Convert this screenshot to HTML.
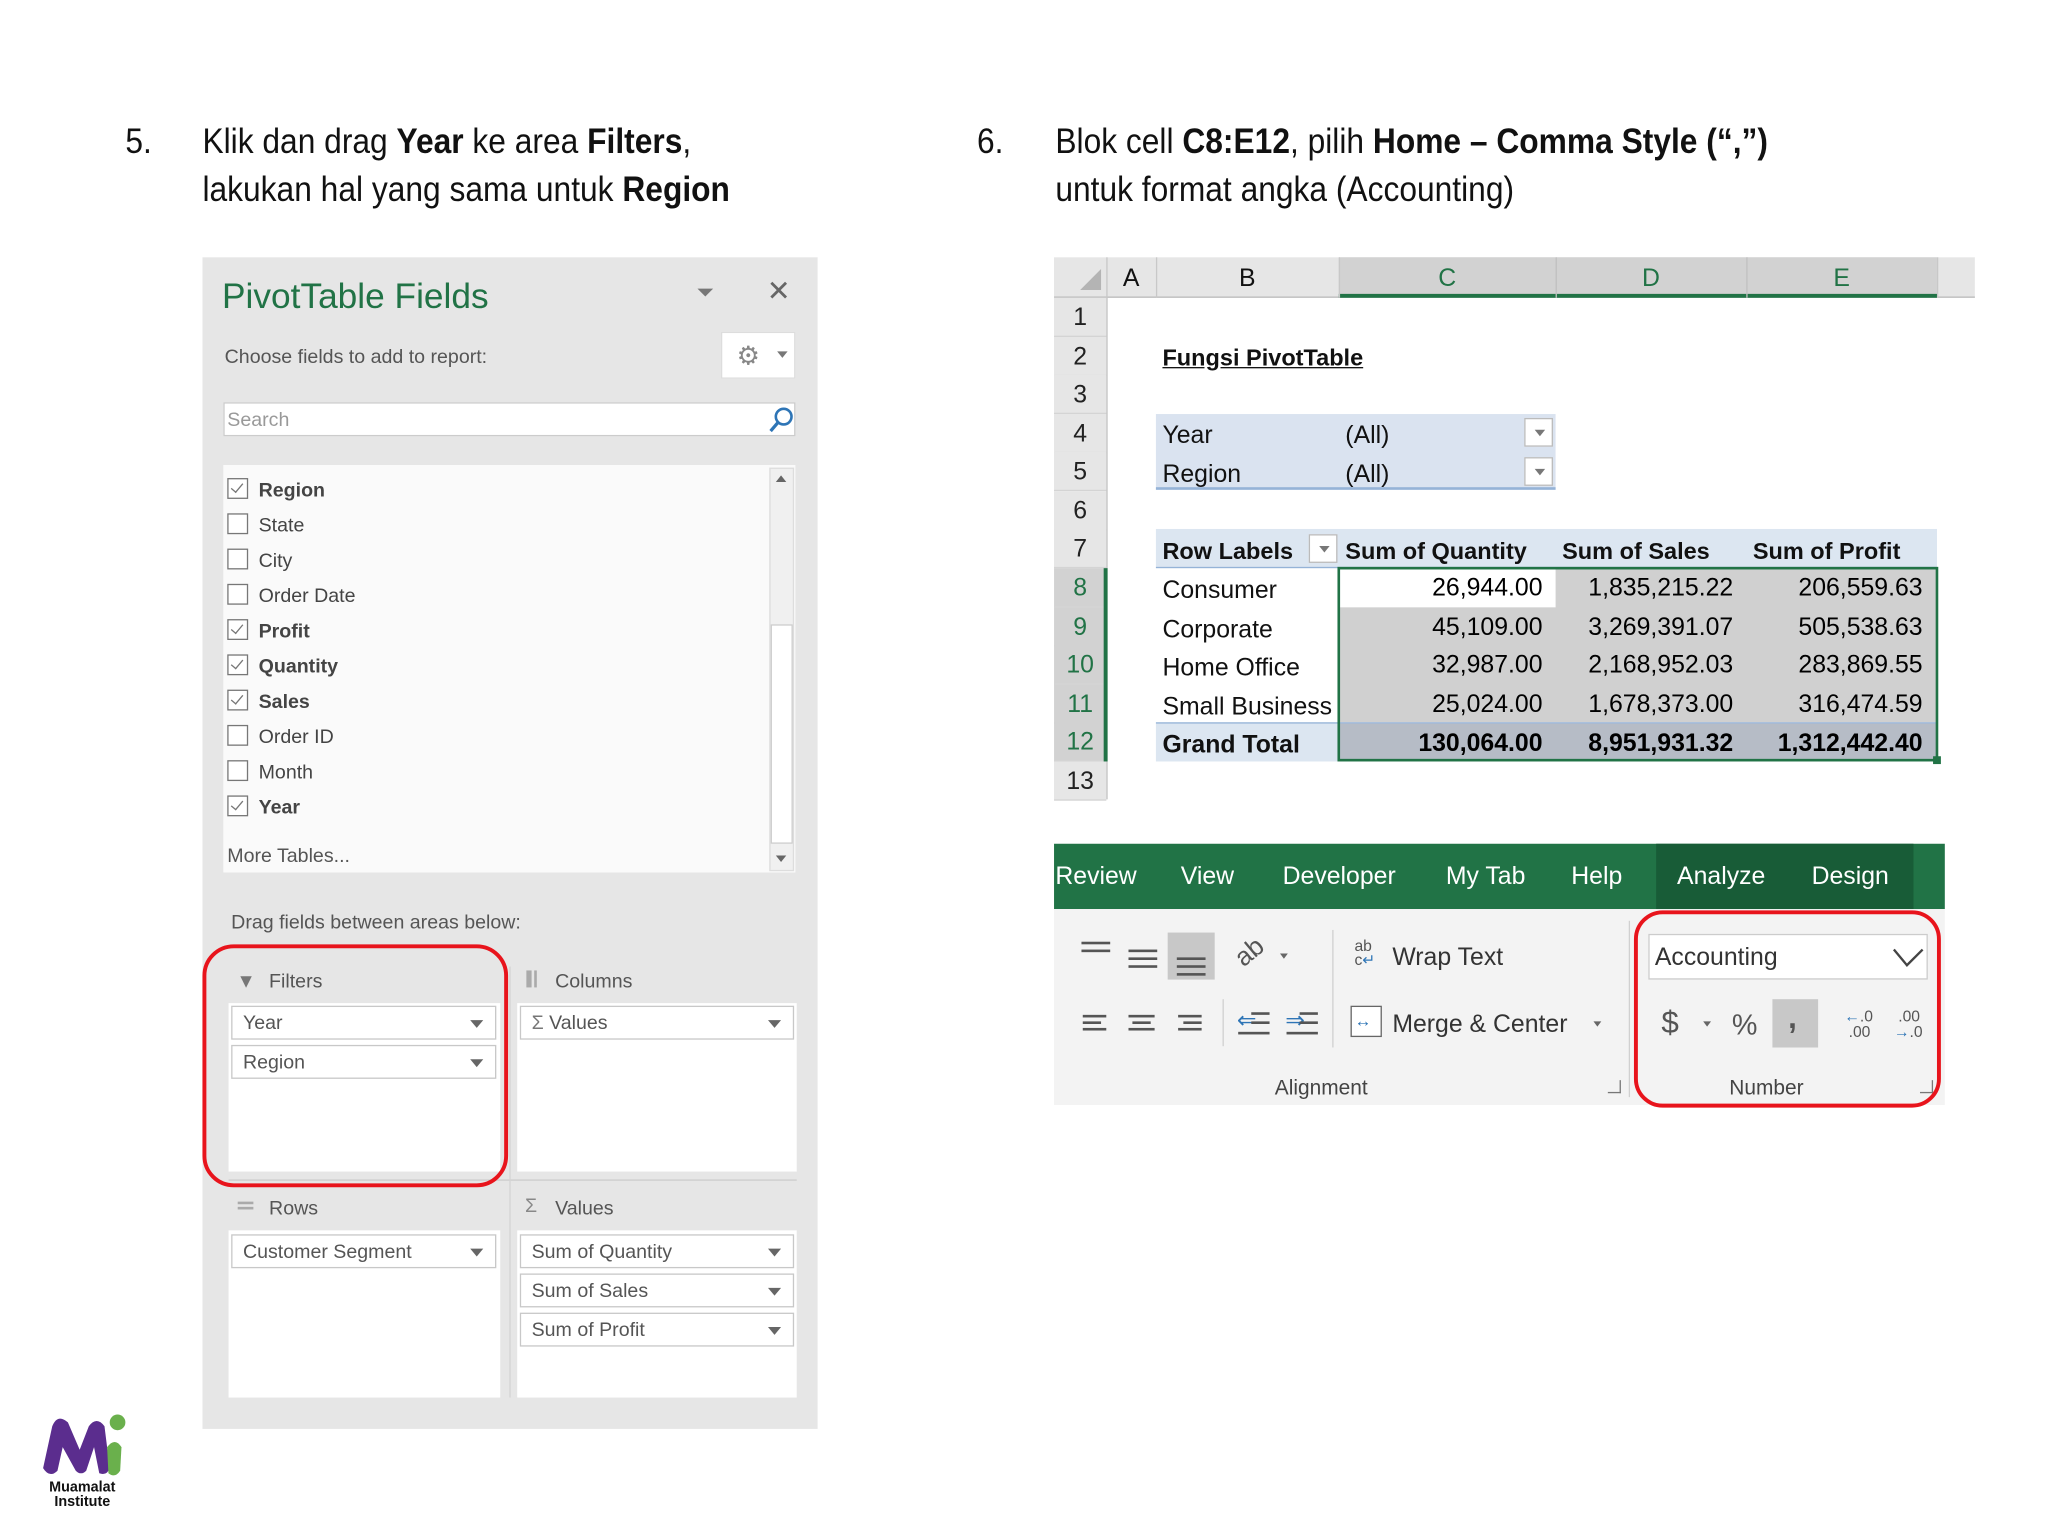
<!DOCTYPE html>
<html><head><meta charset="utf-8"><style>
html,body{margin:0;padding:0;background:#fff;overflow:hidden}
#w{position:absolute;left:0;top:0;width:1568px;height:1176px;transform:scale(1.30612);transform-origin:0 0;font-family:"Liberation Sans",sans-serif}
.a{position:absolute;white-space:nowrap}
.h{font-size:27px;color:#111;transform:scaleX(.9);transform-origin:0 50%}
.p{color:#555;font-size:15px}
.cb{position:absolute;width:14px;height:14px;border:1px solid #777;background:#fff;left:174px}
.cb.c::after{content:"";position:absolute;left:4px;top:1px;width:4px;height:8px;border:solid #777;border-width:0 1.5px 1.5px 0;transform:rotate(40deg)}
.fl{position:absolute;left:198px;font-size:15px;color:#444}
.btn{position:absolute;background:#fff;border:1px solid #c8c8c8;height:26px;line-height:26px;font-size:15px;color:#555;padding-left:8px;box-sizing:border-box}
.btn::after{content:"";position:absolute;right:9px;top:10px;border:5px solid transparent;border-top:6px solid #666;border-bottom:0}
.xl{font-size:19px;color:#111}
.rn{position:absolute;left:807px;width:40px;text-align:center;font-size:19px;color:#222;border-bottom:1px solid #d4d4d4;background:#e6e6e6;height:29px;line-height:31px}
.rn.s{color:#217346;background:#d2d2d2}
.num{position:absolute;text-align:right;font-size:19px;height:29px;line-height:32px}
.tab{position:absolute;top:646px;height:50px;line-height:52px;color:#fff;font-size:19px}
.dd{position:absolute;width:22px;height:22px;background:#fff;border:1px solid #bbb;box-sizing:border-box}
.dd::after{content:"";position:absolute;left:7px;top:8px;border:4px solid transparent;border-top:5px solid #777;border-bottom:0}
.ln{position:absolute;height:1.5px;background:#555}
</style></head><body><div id="w">

<div class="a h" style="left:96px;top:93px">5.</div>
<div class="a h" style="left:155px;top:93px">Klik dan drag <b>Year</b> ke area <b>Filters</b>,</div>
<div class="a h" style="left:155px;top:130px">lakukan hal yang sama untuk <b>Region</b></div>
<div class="a h" style="left:748px;top:93px">6.</div>
<div class="a h" style="left:808px;top:93px">Blok cell <b>C8:E12</b>, pilih <b>Home – Comma Style (“,”)</b></div>
<div class="a h" style="left:808px;top:130px">untuk format angka (Accounting)</div>

<div class="a" style="left:155px;top:197px;width:471px;height:897px;background:#e6e6e6"></div>
<div class="a" style="left:170px;top:212px;font-size:27px;color:#217346">PivotTable Fields</div>
<div class="a" style="left:534px;top:221px;border:6px solid transparent;border-top:6px solid #777;border-bottom:0"></div>
<div class="a" style="left:587px;top:210px;font-size:22px;color:#666">✕</div>
<div class="a p" style="left:172px;top:265px">Choose fields to add to report:</div>
<div class="a" style="left:552px;top:254px;width:57px;height:36px;background:#fff;border:1px solid #ddd;box-sizing:border-box"></div>
<div class="a" style="left:564px;top:260px;font-size:20px;color:#888">⚙</div>
<div class="a" style="left:595px;top:269px;border:4px solid transparent;border-top:5px solid #777;border-bottom:0"></div>
<div class="a" style="left:171px;top:308px;width:438px;height:26px;background:#fff;border:1px solid #ccc;box-sizing:border-box"></div>
<div class="a" style="left:174px;top:313px;font-size:15px;color:#999">Search</div>
<svg class="a" style="left:587px;top:310px" width="22" height="22"><circle cx="13" cy="9" r="6" fill="none" stroke="#2e75b6" stroke-width="2"/><path d="M9 13 L3 20" stroke="#2e75b6" stroke-width="2.5"/></svg>
<div class="a" style="left:171px;top:356px;width:438px;height:312px;background:#fafafa"></div>
<div class="a" style="left:589px;top:358px;width:19px;height:309px;background:#f0f0f0;border:1px solid #ddd;box-sizing:border-box"></div>
<div class="a" style="left:590px;top:478px;width:17px;height:168px;background:#fff;border:1px solid #ccc;box-sizing:border-box"></div>
<div class="a" style="left:594px;top:364px;border:4px solid transparent;border-bottom:5px solid #666;border-top:0"></div>
<div class="a" style="left:594px;top:655px;border:4px solid transparent;border-top:5px solid #666;border-bottom:0"></div>

<div class="cb c" style="top:366px"></div><div class="fl" style="top:367px;font-weight:bold">Region</div>
<div class="cb" style="top:393px"></div><div class="fl" style="top:394px">State</div>
<div class="cb" style="top:420px"></div><div class="fl" style="top:421px">City</div>
<div class="cb" style="top:447px"></div><div class="fl" style="top:448px">Order Date</div>
<div class="cb c" style="top:474px"></div><div class="fl" style="top:475px;font-weight:bold">Profit</div>
<div class="cb c" style="top:501px"></div><div class="fl" style="top:502px;font-weight:bold">Quantity</div>
<div class="cb c" style="top:528px"></div><div class="fl" style="top:529px;font-weight:bold">Sales</div>
<div class="cb" style="top:555px"></div><div class="fl" style="top:556px">Order ID</div>
<div class="cb" style="top:582px"></div><div class="fl" style="top:583px">Month</div>
<div class="cb c" style="top:609px"></div><div class="fl" style="top:610px;font-weight:bold">Year</div>
<div class="a p" style="left:174px;top:647px">More Tables...</div>

<div class="a p" style="left:177px;top:698px">Drag fields between areas below:</div>
<div class="a p" style="left:181px;top:743px;color:#777">▼</div>
<div class="a p" style="left:206px;top:743px">Filters</div>
<div class="a" style="left:403px;top:743px;width:4px;height:13px;background:#aaa"></div><div class="a" style="left:409px;top:743px;width:2px;height:13px;background:#aaa"></div>
<div class="a p" style="left:425px;top:743px">Columns</div>
<div class="a" style="left:175px;top:768px;width:208px;height:129px;background:#fff"></div>
<div class="a" style="left:396px;top:768px;width:214px;height:129px;background:#fff"></div>
<div class="a" style="left:175px;top:903px;width:435px;height:1px;background:#ccc"></div>
<div class="a" style="left:390px;top:740px;width:1px;height:330px;background:#d4d4d4"></div>
<div class="a" style="left:182px;top:920px;width:12px;height:2px;background:#aaa;box-shadow:0 4px 0 #aaa"></div>
<div class="a p" style="left:206px;top:917px">Rows</div>
<div class="a p" style="left:402px;top:915px;color:#888">Σ</div>
<div class="a p" style="left:425px;top:917px">Values</div>
<div class="a" style="left:175px;top:942px;width:208px;height:128px;background:#fff"></div>
<div class="a" style="left:396px;top:942px;width:214px;height:128px;background:#fff"></div>
<div class="btn" style="left:177px;top:770px;width:203px">Year</div>
<div class="btn" style="left:177px;top:800px;width:203px">Region</div>
<div class="btn" style="left:398px;top:770px;width:210px"><span style="color:#777">Σ</span> Values</div>
<div class="btn" style="left:177px;top:945px;width:203px">Customer Segment</div>
<div class="btn" style="left:398px;top:945px;width:210px">Sum of Quantity</div>
<div class="btn" style="left:398px;top:975px;width:210px">Sum of Sales</div>
<div class="btn" style="left:398px;top:1005px;width:210px">Sum of Profit</div>
<div class="a" style="left:155px;top:723px;width:234px;height:186px;border:3.5px solid #e8141c;border-radius:24px;box-sizing:border-box"></div>

<div class="a" style="left:807px;top:197px;width:705px;height:31px;background:#e6e6e6;border-bottom:1px solid #bbb;box-sizing:border-box"></div>
<div class="a" style="left:1025px;top:197px;width:458px;height:31px;background:#d2d2d2;border-bottom:3px solid #217346;box-sizing:border-box"></div>
<svg class="a" style="left:825px;top:204px" width="20" height="20"><path d="M18 2 L18 18 L2 18 Z" fill="#b4b4b4"/></svg>
<div class="a" style="left:847px;top:197px;width:1px;height:31px;background:#c8c8c8"></div>
<div class="a" style="left:885px;top:197px;width:1px;height:31px;background:#c8c8c8"></div>
<div class="a" style="left:1025px;top:197px;width:1px;height:31px;background:#c8c8c8"></div>
<div class="a" style="left:1191px;top:197px;width:1px;height:31px;background:#c0c0c0"></div>
<div class="a" style="left:1337px;top:197px;width:1px;height:31px;background:#c0c0c0"></div>
<div class="a" style="left:1483px;top:197px;width:1px;height:31px;background:#c8c8c8"></div>
<div class="a xl" style="left:847px;width:38px;text-align:center;top:203px">A</div>
<div class="a xl" style="left:885px;width:140px;text-align:center;top:203px">B</div>
<div class="a xl" style="left:1025px;width:166px;text-align:center;top:203px;color:#217346">C</div>
<div class="a xl" style="left:1191px;width:146px;text-align:center;top:203px;color:#217346">D</div>
<div class="a xl" style="left:1337px;width:146px;text-align:center;top:203px;color:#217346">E</div>
<div class="a" style="left:847px;top:228px;width:1px;height:384px;background:#bbb"></div>

<div class="rn" style="top:228px">1</div>
<div class="rn" style="top:258px">2</div>
<div class="rn" style="top:287px">3</div>
<div class="rn" style="top:317px">4</div>
<div class="rn" style="top:346px">5</div>
<div class="rn" style="top:376px">6</div>
<div class="rn" style="top:405px">7</div>
<div class="rn s" style="top:435px">8</div>
<div class="rn s" style="top:465px">9</div>
<div class="rn s" style="top:494px">10</div>
<div class="rn s" style="top:524px">11</div>
<div class="rn s" style="top:553px">12</div>
<div class="rn" style="top:583px">13</div>
<div class="a" style="left:845px;top:435px;width:3px;height:148px;background:#217346"></div>

<div class="a xl" style="left:890px;top:264px;font-weight:bold;text-decoration:underline;font-size:18px">Fungsi PivotTable</div>
<div class="a" style="left:885px;top:317px;width:306px;height:58px;background:#dae3f0;border-bottom:2px solid #95b3d7;box-sizing:border-box"></div>
<div class="a xl" style="left:890px;top:323px">Year</div><div class="a xl" style="left:1030px;top:323px">(All)</div>
<div class="a xl" style="left:890px;top:353px">Region</div><div class="a xl" style="left:1030px;top:353px">(All)</div>
<div class="dd" style="left:1167px;top:320px"></div>
<div class="dd" style="left:1167px;top:350px"></div>

<div class="a" style="left:885px;top:405px;width:598px;height:30px;background:#dce6f1;border-bottom:1.5px solid #95b3d7;box-sizing:border-box"></div>
<div class="a xl" style="left:890px;top:412px;font-weight:bold;font-size:18px">Row Labels</div>
<div class="dd" style="left:1002px;top:409px"></div>
<div class="a xl" style="left:1030px;top:412px;font-weight:bold;font-size:18px">Sum of Quantity</div>
<div class="a xl" style="left:1196px;top:412px;font-weight:bold;font-size:18px">Sum of Sales</div>
<div class="a xl" style="left:1342px;top:412px;font-weight:bold;font-size:18px">Sum of Profit</div>

<div class="a" style="left:1025px;top:435px;width:458px;height:118px;background:#d0d0d0"></div>
<div class="a" style="left:1026px;top:436px;width:165px;height:29px;background:#fff"></div>
<div class="a" style="left:885px;top:553px;width:598px;height:30px;background:#dce6f1;border-top:1.5px solid #95b3d7;box-sizing:border-box"></div>
<div class="a" style="left:1025px;top:554px;width:458px;height:29px;background:#b6bcc6"></div>
<div class="a" style="left:1024px;top:434px;width:460px;height:149px;border:2px solid #217346;box-sizing:border-box"></div>
<div class="a" style="left:1480px;top:579px;width:6px;height:6px;background:#217346"></div>

<div class="a xl" style="left:890px;top:442px">Consumer</div>
<div class="a xl" style="left:890px;top:472px">Corporate</div>
<div class="a xl" style="left:890px;top:501px">Home Office</div>
<div class="a xl" style="left:890px;top:531px">Small Business</div>
<div class="a xl" style="left:890px;top:560px;font-weight:bold">Grand Total</div>

<div class="num" style="left:1025px;width:156px;top:435px">26,944.00</div>
<div class="num" style="left:1191px;width:136px;top:435px">1,835,215.22</div>
<div class="num" style="left:1337px;width:135px;top:435px">206,559.63</div>
<div class="num" style="left:1025px;width:156px;top:465px">45,109.00</div>
<div class="num" style="left:1191px;width:136px;top:465px">3,269,391.07</div>
<div class="num" style="left:1337px;width:135px;top:465px">505,538.63</div>
<div class="num" style="left:1025px;width:156px;top:494px">32,987.00</div>
<div class="num" style="left:1191px;width:136px;top:494px">2,168,952.03</div>
<div class="num" style="left:1337px;width:135px;top:494px">283,869.55</div>
<div class="num" style="left:1025px;width:156px;top:524px">25,024.00</div>
<div class="num" style="left:1191px;width:136px;top:524px">1,678,373.00</div>
<div class="num" style="left:1337px;width:135px;top:524px">316,474.59</div>
<div class="num" style="left:1025px;width:156px;top:554px;font-weight:bold">130,064.00</div>
<div class="num" style="left:1191px;width:136px;top:554px;font-weight:bold">8,951,931.32</div>
<div class="num" style="left:1337px;width:135px;top:554px;font-weight:bold">1,312,442.40</div>

<div class="a" style="left:807px;top:646px;width:682px;height:50px;background:#217346"></div>
<div class="a" style="left:1268px;top:646px;width:197px;height:50px;background:#185c37"></div>
<div class="tab" style="left:808px">Review</div>
<div class="tab" style="left:904px">View</div>
<div class="tab" style="left:982px">Developer</div>
<div class="tab" style="left:1107px">My Tab</div>
<div class="tab" style="left:1203px">Help</div>
<div class="tab" style="left:1284px">Analyze</div>
<div class="tab" style="left:1387px">Design</div>
<div class="a" style="left:807px;top:696px;width:682px;height:150px;background:#f3f3f3"></div>

<div class="ln" style="left:828px;top:721px;width:22px"></div><div class="ln" style="left:828px;top:727px;width:22px"></div>
<div class="ln" style="left:864px;top:727px;width:22px"></div><div class="ln" style="left:864px;top:733px;width:22px"></div><div class="ln" style="left:864px;top:739px;width:22px"></div>
<div class="a" style="left:894px;top:714px;width:36px;height:36px;background:#c8c8c8"></div>
<div class="ln" style="left:901px;top:733px;width:22px"></div><div class="ln" style="left:901px;top:739px;width:22px"></div><div class="ln" style="left:901px;top:745px;width:22px"></div>
<div class="a" style="left:946px;top:718px;font-size:20px;color:#555;transform:rotate(-40deg)">ab</div>
<div class="a" style="left:980px;top:730px;border:3px solid transparent;border-top:4px solid #666;border-bottom:0"></div>
<div class="ln" style="left:829px;top:777px;width:18px"></div><div class="ln" style="left:829px;top:782px;width:14px"></div><div class="ln" style="left:829px;top:787px;width:18px"></div>
<div class="ln" style="left:864px;top:777px;width:20px"></div><div class="ln" style="left:867px;top:782px;width:14px"></div><div class="ln" style="left:864px;top:787px;width:20px"></div>
<div class="ln" style="left:902px;top:777px;width:18px"></div><div class="ln" style="left:906px;top:782px;width:14px"></div><div class="ln" style="left:902px;top:787px;width:18px"></div>
<div class="a" style="left:936px;top:765px;width:1px;height:36px;background:#d0d0d0"></div>
<div class="a" style="left:1020px;top:712px;width:1px;height:90px;background:#d0d0d0"></div>
<div class="a" style="left:947px;top:771px;font-size:18px;color:#2e75b6">⇐</div>
<div class="ln" style="left:958px;top:775px;width:14px"></div><div class="ln" style="left:958px;top:782px;width:14px"></div><div class="ln" style="left:948px;top:790px;width:24px"></div>
<div class="a" style="left:984px;top:771px;font-size:18px;color:#2e75b6">⇒</div>
<div class="ln" style="left:995px;top:775px;width:14px"></div><div class="ln" style="left:995px;top:782px;width:14px"></div><div class="ln" style="left:985px;top:790px;width:24px"></div>
<div class="a" style="left:1037px;top:719px;font-size:12px;color:#555;line-height:11px">ab<br>c<span style="color:#2e75b6">↵</span></div>
<div class="a xl" style="left:1066px;top:723px;color:#333">Wrap Text</div>
<div class="a" style="left:1034px;top:770px;width:24px;height:24px;border:1.5px solid #666;box-sizing:border-box;background:#fff"></div>
<div class="a" style="left:1037px;top:774px;font-size:13px;color:#2e75b6">↔</div>
<div class="a xl" style="left:1066px;top:774px;color:#333">Merge &amp; Center</div>
<div class="a" style="left:1220px;top:782px;border:3px solid transparent;border-top:4px solid #666;border-bottom:0"></div>
<div class="a" style="left:976px;top:825px;font-size:16px;color:#444">Alignment</div>
<div class="a" style="left:1231px;top:827px;width:9px;height:9px;border:1px solid #777;border-width:0 1px 1px 0"></div>
<div class="a" style="left:1247px;top:705px;width:1px;height:135px;background:#d0d0d0"></div>

<div class="a" style="left:1262px;top:715px;width:214px;height:35px;background:#fff;border:1px solid #ccc;box-sizing:border-box"></div>
<div class="a xl" style="left:1267px;top:723px;color:#333">Accounting</div>
<svg class="a" style="left:1448px;top:724px" width="26" height="18"><path d="M2 3 L12 15 L24 3" fill="none" stroke="#444" stroke-width="1.8"/></svg>
<div class="a" style="left:1272px;top:770px;font-size:24px;color:#555">$</div>
<div class="a" style="left:1304px;top:782px;border:3px solid transparent;border-top:4px solid #666;border-bottom:0"></div>
<div class="a" style="left:1326px;top:772px;font-size:22px;color:#555">%</div>
<div class="a" style="left:1357px;top:765px;width:35px;height:37px;background:#c8c8c8"></div>
<div class="a" style="left:1369px;top:766px;font-size:24px;color:#555;font-weight:bold">,</div>
<div class="a" style="left:1412px;top:772px;font-size:12px;line-height:12px;color:#555"><span style="color:#2e75b6">←</span>.0<br>&nbsp;.00</div>
<div class="a" style="left:1450px;top:772px;font-size:12px;line-height:12px;color:#555">&nbsp;.00<br><span style="color:#2e75b6">→</span>.0</div>
<div class="a" style="left:1324px;top:825px;font-size:16px;color:#444">Number</div>
<div class="a" style="left:1470px;top:827px;width:9px;height:9px;border:1px solid #777;border-width:0 1px 1px 0"></div>
<div class="a" style="left:1251px;top:697px;width:235px;height:151px;border:3.5px solid #e8141c;border-radius:22px;box-sizing:border-box"></div>

<svg class="a" style="left:28px;top:1080px" width="70" height="52">
<path d="M5 44 L12 12 Q16 2 24 9 L33 30 L40 12 Q46 4 52 12 L56 44 Q54 50 48 48 L44 28 L38 46 Q34 50 30 46 L20 28 L16 46 Q10 52 5 44 Z" fill="#5b2d8e"/>
<path d="M54 28 Q60 20 65 28 L64 46 Q60 52 55 48 Z" fill="#6ab04c"/>
<circle cx="62" cy="9" r="6" fill="#6ab04c"/>
</svg>
<div class="a" style="left:31px;top:1134px;font-size:11px;font-weight:bold;line-height:11px;text-align:center;width:64px;color:#111">Muamalat<br>Institute</div>

</div></body></html>
